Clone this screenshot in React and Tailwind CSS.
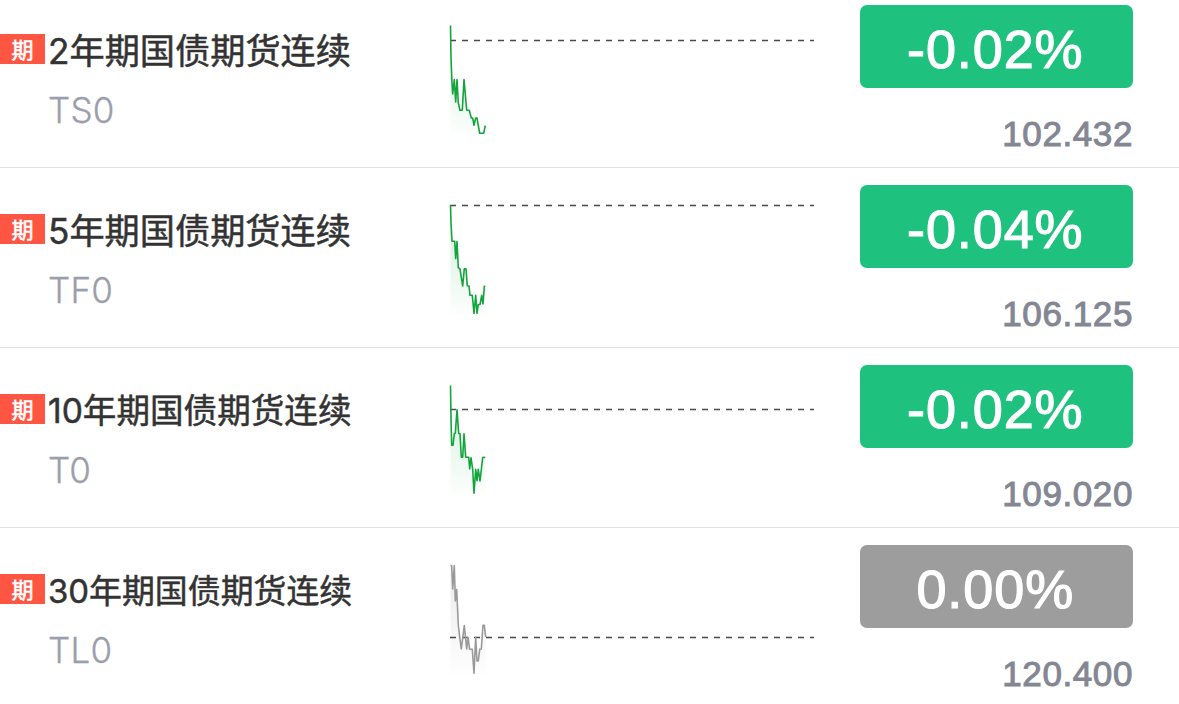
import React from 'react';

const futures = [
  {
    code: 'TS0',
    name: '2年期国债期货连续',
    nameClass: 'text-[35.2px]',
    change: '-0.02%',
    price: '102.432',
    pill: 'bg-[#1fc17e]',
    stroke: '#12a53c',
    base: 15.5,
    points: '0.5,0.5 1,33 2,58 2.7,69 4.3,54.5 5.7,77 7,54.5 8.3,78 10,85.3 12.3,85.3 14,54.5 16.7,85.3 19.3,85.3 21.3,93 22.7,93 24,100.3 25.7,93 27,93 29.7,108.3 33.7,108.3 35.3,100.7',
  },
  {
    code: 'TF0',
    name: '5年期国债期货连续',
    nameClass: 'text-[35.2px]',
    change: '-0.04%',
    price: '106.125',
    pill: 'bg-[#1fc17e]',
    stroke: '#12a53c',
    base: 0.5,
    points: '0.5,0.5 1,18 2,36.3 4.7,36.3 5.7,53.7 7,36.5 8.3,62.7 10,64 12.7,81 14.3,63.7 16,63.7 17.3,80.7 19,81 20,90.3 22.3,90.3 24,108.3 25.7,90.3 27,108.3 28.3,99.5 30,99.5 31.7,90.3 33,99 34.3,81.3 35.3,81.3',
  },
  {
    code: 'T0',
    name: '10年期国债期货连续',
    nameClass: 'text-[33.6px]',
    change: '-0.02%',
    price: '109.020',
    pill: 'bg-[#1fc17e]',
    stroke: '#12a53c',
    base: 24.5,
    points: '0.5,0.5 1,33 1.7,60.3 3,60.3 4.3,48.7 5.3,48.3 7,24.7 8.7,48.5 10,48.7 11.3,72.3 12.7,72.3 14,48.7 15.7,72.3 18.7,72.3 19.7,84 21,72.7 22.7,84.3 24,108.3 25.7,84.3 27,95.7 28.3,84.3 30,96 32.7,72.5 35.3,72.3',
  },
  {
    code: 'TL0',
    name: '30年期国债期货连续',
    nameClass: 'text-[32.9px]',
    change: '0.00%',
    price: '120.400',
    pill: 'bg-[#9d9d9d]',
    stroke: '#999999',
    base: 72.5,
    points: '0.5,0.5 1.7,0.5 2.7,24 4.3,0.5 5.3,36 6.7,24.5 8.3,60 9.7,72 11.3,84 14.3,60.5 16.7,84 18,72.3 19.7,84.3 22.3,84.3 24,108.3 25.7,72.3 27,96 28.3,96 29.7,84.3 31.3,84 33,60.3 34.3,60.3 35.7,72',
  },
];

const Sparkline = ({ id, points, base, stroke }) => (
  <svg className="mt-[37px] shrink-0 overflow-visible" width="364" height="112" viewBox="0 0 364 112" fill="none">
    <defs>
      <linearGradient id={`fill-${id}`} x1="0" y1="0" x2="0" y2="1">
        <stop offset="0" stopColor={stroke} stopOpacity="0.2" />
        <stop offset="1" stopColor={stroke} stopOpacity="0.01" />
      </linearGradient>
    </defs>
    <polygon points={`${points} 35.3,109 0.5,109`} fill={`url(#fill-${id})`} />
    <line x1="0" x2="364" y1={base} y2={base} stroke="#4a4a4a" strokeWidth="1.5" strokeDasharray="6 6" />
    <polyline points={points} stroke={stroke} strokeWidth="1.6" strokeLinejoin="round" />
  </svg>
);

const FutureRow = ({ item }) => (
  <li className="flex h-[180px] items-start border-b border-[#e1e1e3] last:border-b-0">
    <div className="w-[450px] shrink-0 pt-[38px]">
      <div className="flex h-[50px] items-center">
        <span className="mt-[-4px] flex h-[30px] w-[45px] shrink-0 items-center justify-center bg-[#ff5643] pb-[2px] font-['Noto_Sans_CJK_SC',sans-serif] text-[22px] leading-none text-white [-webkit-text-stroke:0.6px_white]">
          期
        </span>
        <span className={`ml-[3px] whitespace-nowrap font-['Inter','Noto_Sans_CJK_SC',sans-serif] leading-[50px] text-[#333333] [-webkit-text-stroke:0.5px_#333333] ${item.nameClass}`}>
          {item.name}
        </span>
      </div>
      <div className="ml-12 mt-[9px] font-['Inter',sans-serif] text-[35px] font-light leading-[50px] tracking-[0.2px] text-[#9b9eab] [-webkit-text-stroke:0.3px_#9b9eab]">{item.code}</div>
    </div>
    <Sparkline id={item.code} points={item.points} base={item.base} stroke={item.stroke} />
    <div className="flex flex-1 flex-col items-end pr-[46px] pt-[16.5px] font-['Liberation_Sans',sans-serif]">
      <div className={`flex h-[83.5px] w-[273.5px] items-center justify-center rounded-[7px] pr-[2px] pt-[5px] text-[54px] leading-none tracking-[0.9px] text-white [-webkit-text-stroke:1.2px_white] ${item.pill}`}>
        {item.change}
      </div>
      <div className="mt-[26px] text-[35px] leading-[40px] tracking-[0.6px] text-[#838794] [-webkit-text-stroke:1px_#838794]">{item.price}</div>
    </div>
  </li>
);

function App() {
  return (
    <div className="h-[704px] w-[1179px] overflow-hidden bg-white">
      <ul className="-mt-3">
        {futures.map((item) => (
          <FutureRow key={item.code} item={item} />
        ))}
      </ul>
    </div>
  );
}

export default App;
